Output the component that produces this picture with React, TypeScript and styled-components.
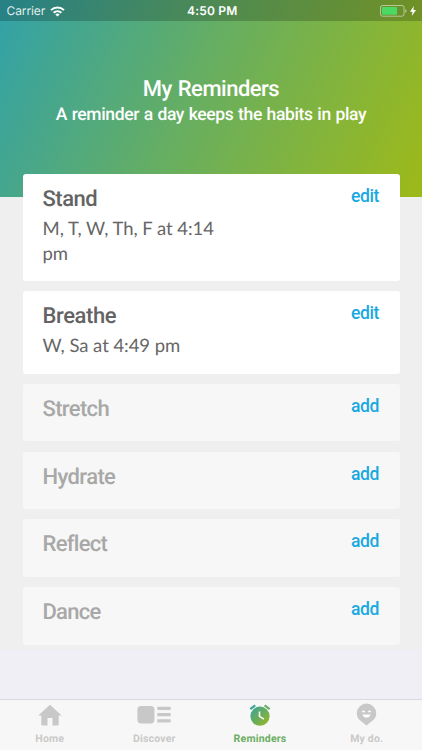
import React from 'react';
import styled, { createGlobalStyle } from 'styled-components';

const GlobalStyle = createGlobalStyle`
  * { box-sizing: border-box; }
  body { margin: 0; background: #efeff5; }
`;

const Screen = styled.div`
  width: 422px;
  height: 750px;
  display: flex;
  flex-direction: column;
  overflow: hidden;
  background: #efeff5;
  font-family: Roboto, 'Liberation Sans', sans-serif;
  text-rendering: geometricPrecision;
`;

const Header = styled.header`
  height: 197px;
  flex: none;
  background: linear-gradient(115deg, #33a2a6 2%, #66ae62 46%, #9cb91b 98%);
`;

const StatusBar = styled.div`
  height: 21px;
  padding: 1px 6px 0 6.5px;
  display: grid;
  grid-template-columns: 1fr auto 1fr;
  align-items: center;
  background: rgba(0, 0, 0, 0.2);
  color: #fff;
  font-family: Inter, sans-serif;
`;

const Carrier = styled.div`
  display: flex;
  align-items: center;
  gap: 5px;
  font-size: 12px;
  line-height: 20px;
  letter-spacing: -0.1px;
  color: rgba(255, 255, 255, 0.88);
`;

const Clock = styled.div`
  padding-left: 2px;
  font-size: 12px;
  line-height: 20px;
  font-weight: 600;
  letter-spacing: 0.2px;
`;

const Power = styled.div`
  display: flex;
  justify-content: flex-end;
  align-items: center;
  gap: 3px;
`;

const Title = styled.h1`
  margin: 55px 0 0;
  text-align: center;
  color: #fff;
  font-size: 22px;
  line-height: 28px;
  font-weight: 500;
  letter-spacing: -0.5px;
  word-spacing: 1px;
`;

const Subtitle = styled.p`
  margin: -1px 0 0;
  text-align: center;
  color: #fff;
  font-size: 17.5px;
  line-height: 24px;
  font-weight: 500;
  letter-spacing: -0.35px;
  word-spacing: 0.6px;
  white-space: nowrap;
`;

const List = styled.main`
  flex: none;
  height: 453px;
  padding: 0 22px 0 22.5px;
  background: #efefef;
`;

const Cards = styled.div`
  display: flex;
  flex-direction: column;
  gap: 10.3px;
  margin-top: -23px;
`;

const Card = styled.section<{ $height: number; $active: boolean }>`
  height: ${p => p.$height}px;
  flex: none;
  display: flex;
  justify-content: space-between;
  padding: 11px 21px 0 20px;
  border-radius: 3px;
  background: ${p => (p.$active ? '#fff' : '#f7f7f7')};
`;

const Name = styled.h2<{ $active: boolean; $spacing: number }>`
  margin: 0;
  font-size: 22px;
  line-height: 29px;
  font-weight: 500;
  letter-spacing: ${p => p.$spacing}px;
  color: ${p => (p.$active ? '#636363' : '#a8a8a8')};
`;

const Schedule = styled.p`
  margin: 2px 0 0;
  width: 190px;
  font-family: Lato, sans-serif;
  font-size: 18.5px;
  line-height: 25.4px;
  letter-spacing: -0.05px;
  color: #666;
`;

const Action = styled.button`
  align-self: flex-start;
  padding: 0;
  border: 0;
  background: none;
  color: #18a9e1;
  font-family: inherit;
  font-size: 17.5px;
  line-height: 23.4px;
  font-weight: 500;
  letter-spacing: -0.4px;
`;

const TabBar = styled.nav`
  margin-top: auto;
  height: 51px;
  flex: none;
  display: grid;
  grid-template-columns: repeat(4, 1fr);
  border-top: 1px solid #d9d9de;
  background: #f7f7f7;
`;

const Tab = styled.a<{ $active?: boolean; $shift: number }>`
  display: flex;
  flex-direction: column;
  align-items: center;
  padding-top: 2px;
  padding-right: ${p => p.$shift}px;
  font-size: 10.5px;
  line-height: 15px;
  font-weight: 700;
  letter-spacing: 0.2px;
  color: ${p => (p.$active ? '#6aae62' : '#cac9c9')};
  svg { display: block; margin-bottom: 3px; }
`;

const reminders = [
  { name: 'Stand', schedule: 'M, T, W, Th, F at 4:14 pm', height: 106.8, spacing: -0.5 },
  { name: 'Breathe', schedule: 'W, Sa at 4:49 pm', height: 82.5, spacing: -0.4 },
  { name: 'Stretch', height: 57.5, spacing: -0.65 },
  { name: 'Hydrate', height: 57.5, spacing: -0.6 },
  { name: 'Reflect', height: 57.5, spacing: -0.7 },
  { name: 'Dance', height: 57.5, spacing: -0.75 },
];

const WifiIcon = () => (
  <svg width="15" height="11" viewBox="0 0 15 11" fill="none" stroke="#fff" strokeWidth="2">
    <path d="M1 4.1C4.7.5 10.3.5 14 4.1" />
    <path d="M3.6 6.8C5.8 4.7 9.2 4.7 11.4 6.8" />
    <path d="M7.5 10.6 5.3 8.4Q7.5 6.6 9.7 8.4Z" fill="#fff" stroke="none" />
  </svg>
);

const BatteryIcon = () => (
  <svg width="27" height="12" viewBox="0 0 27 12">
    <rect x=".5" y=".5" width="23.5" height="10.7" rx="2" fill="none" stroke="#fff" strokeOpacity=".5" />
    <rect x="2" y="2" width="15" height="7.7" rx=".6" fill="#4bd964" />
    <path d="M25.2 4v4Q26.6 7 26.6 6T25.2 4Z" fill="#fff" fillOpacity=".5" />
  </svg>
);

const BoltIcon = () => (
  <svg width="6" height="10" viewBox="0 0 6 10">
    <path d="M3.8 0 0 5.7h2.5L1.8 10 6 4.1H3.4Z" fill="#fff" />
  </svg>
);

const HomeIcon = () => (
  <svg width="24" height="26" viewBox="0 0 24 26" fill="#c9c8c8">
    <path d="M12 2.8.3 13.6h3V22q0 1.6 1.3 1.6h4.9V16h5v7.6h4.9q1.3 0 1.3-1.6v-8.4h3Z" />
  </svg>
);

const DiscoverIcon = () => (
  <svg width="34" height="26" viewBox="0 0 34 26" fill="#c9c8c8">
    <rect x=".4" y="4" width="17" height="17.4" rx="3.6" />
    <path d="M20.3 4.8h13.4v3.3H20.3zM20.3 11h13.4v3.3H20.3zM20.3 17.2h13.4v3.3H20.3z" />
  </svg>
);

const AlarmIcon = () => (
  <svg width="22" height="26" viewBox="0 0 22 26" fill="none">
    <defs>
      <linearGradient id="clock" x1="2" y1="5" x2="20" y2="23" gradientUnits="userSpaceOnUse">
        <stop stopColor="#3aa49c" />
        <stop offset=".5" stopColor="#68ad5c" />
        <stop offset="1" stopColor="#9ab824" />
      </linearGradient>
    </defs>
    <circle cx="11" cy="14.2" r="9.6" fill="url(#clock)" />
    <path d="m1.3 7.1 4.9-3.8" stroke="#41a39b" strokeWidth="2.3" />
    <path d="m15.6 3.3 5 3.8" stroke="#6bae66" strokeWidth="2.3" />
    <path d="M10.5 9.5v4.9l4.4 2.7" stroke="#fff" strokeWidth="1.6" />
  </svg>
);

const PinIcon = () => (
  <svg width="21" height="26" viewBox="0 0 21 26" fill="none">
    <path d="M10.5 1.6A9.7 9.7 0 0 1 20.2 11.3Q20.2 16 16.7 18.4L10.5 23.4 4.3 18.4Q.8 16 .8 11.3A9.7 9.7 0 0 1 10.5 1.6Z" fill="#c9c8c8" />
    <path d="M6.3 10.1q1.3-1.7 2.5 0M12.2 10.1q1.3-1.7 2.5 0" stroke="#fff" strokeWidth="1.3" />
    <path d="M6.4 12.4h8.2q-.8 3.1-4.1 3.1t-4.1-3.1Z" fill="#fff" />
  </svg>
);

const tabs = [
  { label: 'Home', Icon: HomeIcon, shift: 6 },
  { label: 'Discover', Icon: DiscoverIcon, shift: 8 },
  { label: 'Reminders', Icon: AlarmIcon, shift: 7.5 },
  { label: 'My do.', Icon: PinIcon, shift: 5 },
];

export default function App() {
  return (
    <>
      <GlobalStyle />
      <Screen>
        <Header>
          <StatusBar>
            <Carrier>Carrier <WifiIcon /></Carrier>
            <Clock>4:50 PM</Clock>
            <Power><BatteryIcon /><BoltIcon /></Power>
          </StatusBar>
          <Title>My Reminders</Title>
          <Subtitle>A reminder a day keeps the habits in play</Subtitle>
        </Header>
        <List>
          <Cards>
            {reminders.map(({ name, schedule, height, spacing }) => (
              <Card key={name} $height={height} $active={!!schedule}>
                <div>
                  <Name $active={!!schedule} $spacing={spacing}>{name}</Name>
                  {schedule && <Schedule>{schedule}</Schedule>}
                </div>
                <Action>{schedule ? 'edit' : 'add'}</Action>
              </Card>
            ))}
          </Cards>
        </List>
        <TabBar>
          {tabs.map(({ label, Icon, shift }) => (
            <Tab key={label} $active={label === 'Reminders'} $shift={shift}>
              <Icon />
              {label}
            </Tab>
          ))}
        </TabBar>
      </Screen>
    </>
  );
}
